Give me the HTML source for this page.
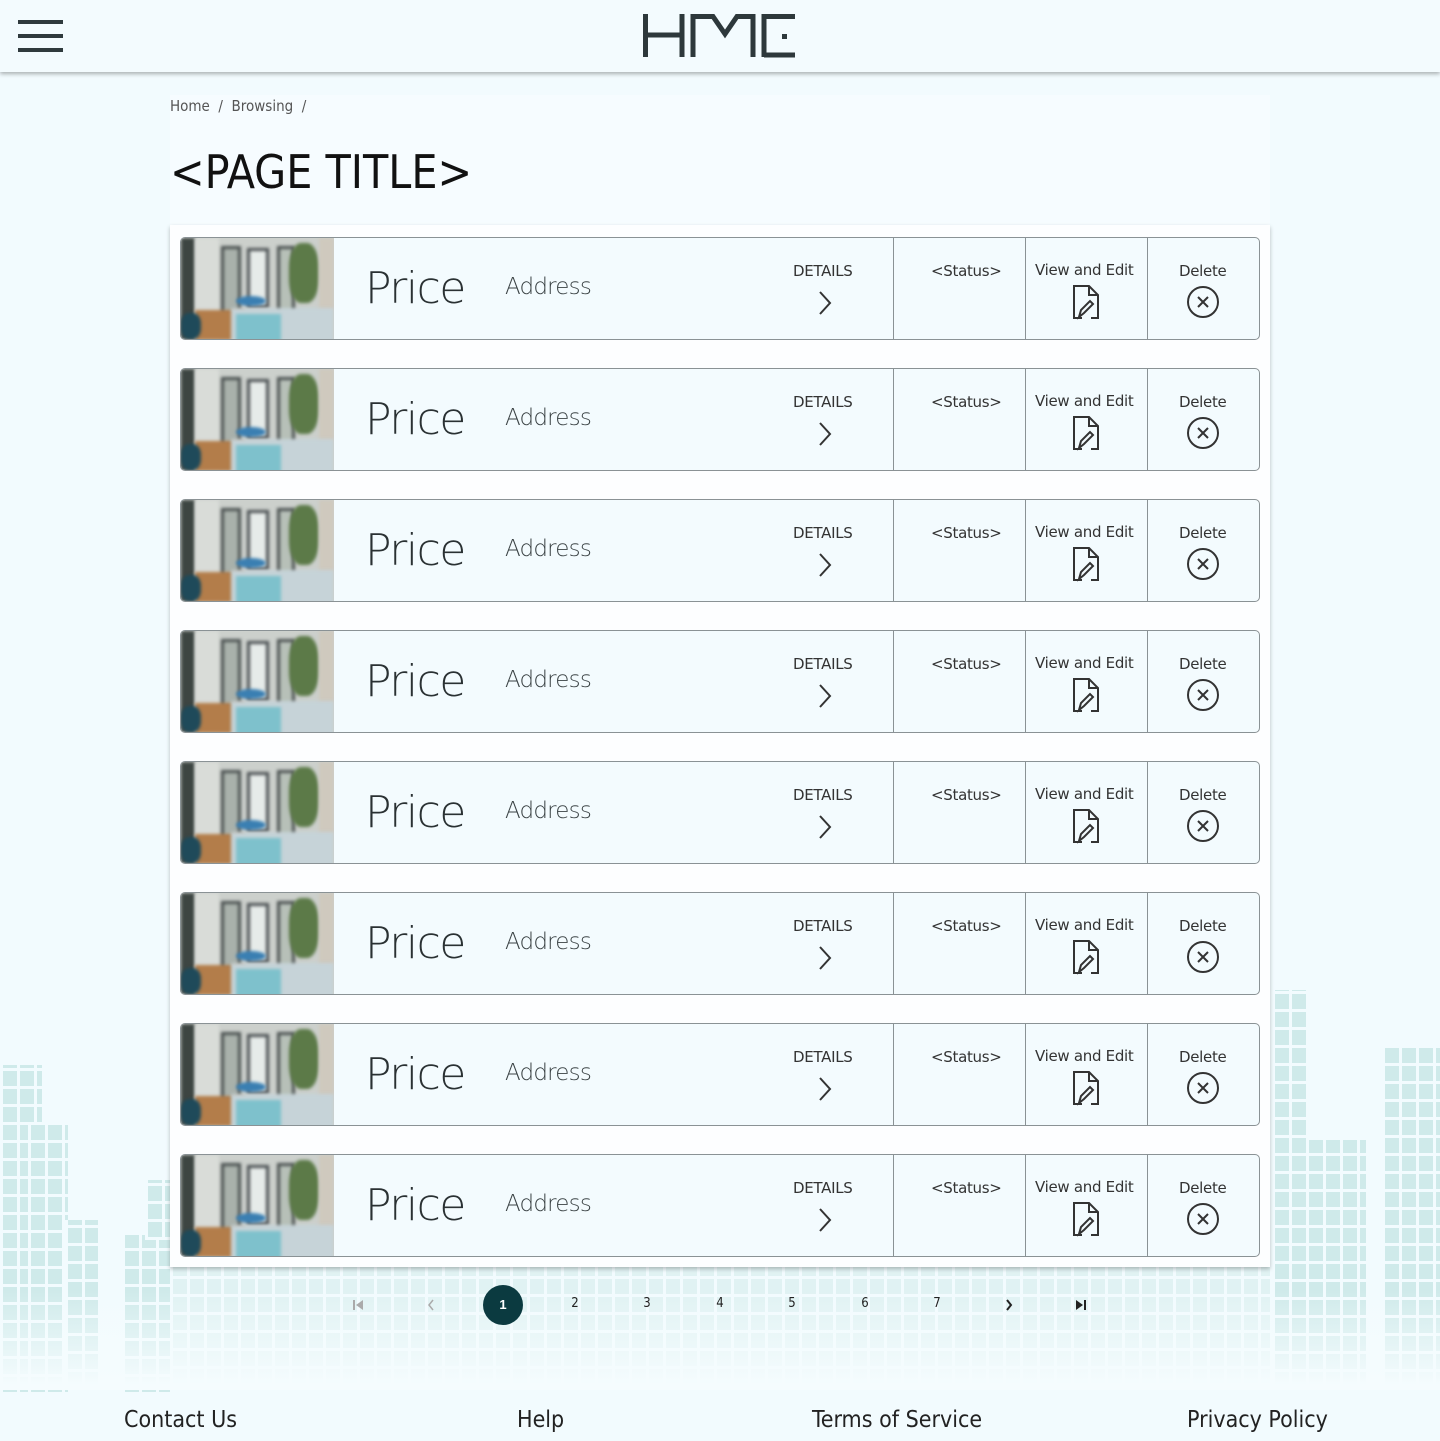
<!DOCTYPE html>
<html><head><meta charset="utf-8"><style>
*{box-sizing:border-box;margin:0;padding:0}
body{width:1440px;height:1441px;position:relative;overflow:hidden;background:#f2fbfe;font-family:"Liberation Sans",sans-serif;color:#222}
.hdr{position:absolute;left:0;top:0;width:1440px;height:72px;background:#f3fbfe;box-shadow:0 2px 4px rgba(0,0,0,.3);z-index:5}
.bld{position:absolute;background-color:#cfeaea;background-image:repeating-linear-gradient(90deg,#f2fbfe 0 3px,transparent 3px 17px),repeating-linear-gradient(0deg,#f2fbfe 0 3px,transparent 3px 18px)}
.fade{position:absolute;left:0;top:1290px;width:1440px;height:100px;background:linear-gradient(rgba(243,251,254,0),#f5fcfe 95%)}
.panel{position:absolute;left:170px;top:225px;width:1100px;height:1042px;background:#fdfeff;box-shadow:0 2px 4px rgba(0,0,0,.25)}
.tpanel{position:absolute;left:170px;top:95px;width:1100px;height:130px;background:#f6fcff}
.card{position:absolute;left:180px;width:1080px;height:103px;border:1px solid #8a9295;border-radius:5px;background:#f3fbfe;overflow:hidden}
.img{position:absolute;left:0;top:0;width:153px;height:101px;overflow:hidden;background:#ccd0cc}
.img i{position:absolute;display:block;filter:blur(1.5px)}
.price{position:absolute;left:184px;top:25px;font-size:44px;color:#2a3133;font-family:"DejaVu Sans","Liberation Sans",sans-serif;font-weight:300;letter-spacing:-1.5px}
.addr{position:absolute;left:324px;top:36px;font-size:23px;color:#3a4244;font-family:"DejaVu Sans",sans-serif;font-weight:300;letter-spacing:-.8px}
.div{position:absolute;top:0;width:1px;height:101px;background:#8a9295}
.lbl{position:absolute;top:23px;font-size:15px;color:#333;text-align:center;font-family:"DejaVu Sans",sans-serif;letter-spacing:-.3px}
.ic{position:absolute}
.pg{position:absolute;top:1296px;font-size:13px;color:#222;width:20px;text-align:center;font-family:"DejaVu Sans Condensed","Liberation Sans",sans-serif}
.foot{position:absolute;top:1407px;font-size:23px;color:#222;font-family:"DejaVu Sans Condensed","Liberation Sans",sans-serif;font-weight:300}
</style></head><body>
<div class="bld" style="left:0;top:1065px;width:42px;height:330px"></div>
<div class="bld" style="left:28px;top:1125px;width:40px;height:270px"></div>
<div class="bld" style="left:65px;top:1220px;width:33px;height:170px"></div>
<div class="bld" style="left:122px;top:1235px;width:48px;height:160px"></div>
<div class="bld" style="left:145px;top:1180px;width:25px;height:60px"></div>
<div class="bld" style="left:1272px;top:990px;width:34px;height:400px"></div>
<div class="bld" style="left:1306px;top:1140px;width:60px;height:250px"></div>
<div class="bld" style="left:1382px;top:1045px;width:58px;height:345px"></div>
<div class="bld" style="left:170px;top:1267px;width:1100px;height:120px;opacity:.5"></div>
<div class="fade"></div>
<div class="hdr">
<div style="position:absolute;left:18px;top:20px;width:45px;height:4px;background:#2f3a3d;box-shadow:0 14px 0 #2f3a3d,0 28px 0 #2f3a3d"></div>
<svg style="position:absolute;left:643px;top:14px" width="153" height="44" viewBox="0 0 153 44" fill="none" stroke="#2d383b" stroke-width="5"><path d="M2.5 0V43M2.5 21H39M39 0V43M50 43V2.5H70L82 20L94 2.5H110V43M121 43V2.5H152M121 41H152"/><rect x="139" y="20" width="5" height="5" fill="#2d383b" stroke="none"/></svg>
</div>
<div class="tpanel"></div>
<div style="position:absolute;left:170px;top:97px;font-size:15px;color:#555;font-family:'DejaVu Sans Condensed',sans-serif">Home &nbsp;/ &nbsp;Browsing &nbsp;/</div>
<div style="position:absolute;left:170px;top:145px;font-size:46px;color:#111;font-family:'DejaVu Sans Condensed',sans-serif">&lt;PAGE TITLE&gt;</div>
<div class="panel"></div>
<div id="cards"></div>
<svg style="position:absolute;left:352px;top:1299px" width="12" height="12"><rect x="1" y="1" width="2" height="10" fill="#aaa"/><path d="M11 1L4 6L11 11Z" fill="#aaa"/></svg>
<svg style="position:absolute;left:426px;top:1299px" width="10" height="12"><path d="M7 1L3 6L7 11" fill="none" stroke="#aaa" stroke-width="1.5"/></svg>
<div style="position:absolute;left:483px;top:1285px;width:40px;height:40px;border-radius:50%;background:#0b3a40;color:#fff;font-size:13px;text-align:center;line-height:40px;font-weight:bold">1</div>
<div class="pg" style="left:565px">2</div><div class="pg" style="left:637px">3</div><div class="pg" style="left:710px">4</div><div class="pg" style="left:782px">5</div><div class="pg" style="left:855px">6</div><div class="pg" style="left:927px">7</div>
<svg style="position:absolute;left:1004px;top:1299px" width="10" height="12"><path d="M3 1L7 6L3 11" fill="none" stroke="#222" stroke-width="2"/></svg>
<svg style="position:absolute;left:1075px;top:1299px" width="12" height="12"><path d="M1 1L8 6L1 11Z" fill="#222"/><rect x="9" y="1" width="2" height="10" fill="#222"/></svg>
<div class="foot" style="left:124px">Contact Us</div>
<div class="foot" style="left:517px">Help</div>
<div class="foot" style="left:812px">Terms of Service</div>
<div class="foot" style="left:1187px">Privacy Policy</div>
<script>
var im='<i style="left:0;top:0;width:14px;height:101px;background:#3d4542"></i><i style="left:14px;top:0;width:24px;height:101px;background:#d9dcd8"></i><i style="left:40px;top:8px;width:20px;height:70px;background:#a9b1ab;border:3px solid #4a5050"></i><i style="left:66px;top:10px;width:22px;height:60px;background:#e6ebe9;border:3px solid #4a4f52"></i><i style="left:96px;top:8px;width:18px;height:70px;background:#b7c0b8;border:3px solid #4a5050"></i><i style="left:108px;top:5px;width:30px;height:60px;background:#5c7a48;border-radius:40%"></i><i style="left:138px;top:0;width:15px;height:101px;background:#cfc9be"></i><i style="left:55px;top:58px;width:30px;height:10px;background:#3a7fb2;border-radius:50%"></i><i style="left:14px;top:72px;width:50px;height:30px;background:#b37d4a"></i><i style="left:0;top:75px;width:20px;height:26px;background:#1f4a5a;border-radius:40%"></i><i style="left:50px;top:70px;width:103px;height:35px;background:#c6d3d8"></i><i style="left:55px;top:76px;width:45px;height:30px;background:#7ec1cc"></i>';
var h='';for(var i=0;i<8;i++){var t=237+131*i;h+='<div class="card" style="top:'+t+'px"><div class="img">'+im+'</div><div class="price">Price</div><div class="addr">Address</div><div class="lbl" style="left:612px;top:24px">DETAILS</div><svg class="ic" style="left:636px;top:52px" width="16" height="26"><path d="M3 2L13 13L3 24" fill="none" stroke="#333" stroke-width="2"/></svg><div class="div" style="left:712px"></div><div class="lbl" style="left:750px;top:24px">&lt;Status&gt;</div><div class="div" style="left:844px"></div><div class="lbl" style="left:854px;top:23px">View and Edit</div><svg class="ic" style="left:890px;top:46px" width="30" height="36" viewBox="0 0 30 36" fill="none" stroke="#333" stroke-width="2"><path d="M11 34H3V2H18L27 11V34H20M18 2V11H27M8 33L10 26L19 17L22 20L13 29Z"/></svg><div class="div" style="left:966px"></div><div class="lbl" style="left:998px;top:24px">Delete</div><svg class="ic" style="left:1005px;top:47px" width="34" height="34"><circle cx="17" cy="17" r="15" fill="none" stroke="#333" stroke-width="2"/><path d="M12 12L22 22M22 12L12 22" stroke="#333" stroke-width="2"/></svg></div>'}
document.getElementById('cards').innerHTML=h;
</script>
</body></html>
